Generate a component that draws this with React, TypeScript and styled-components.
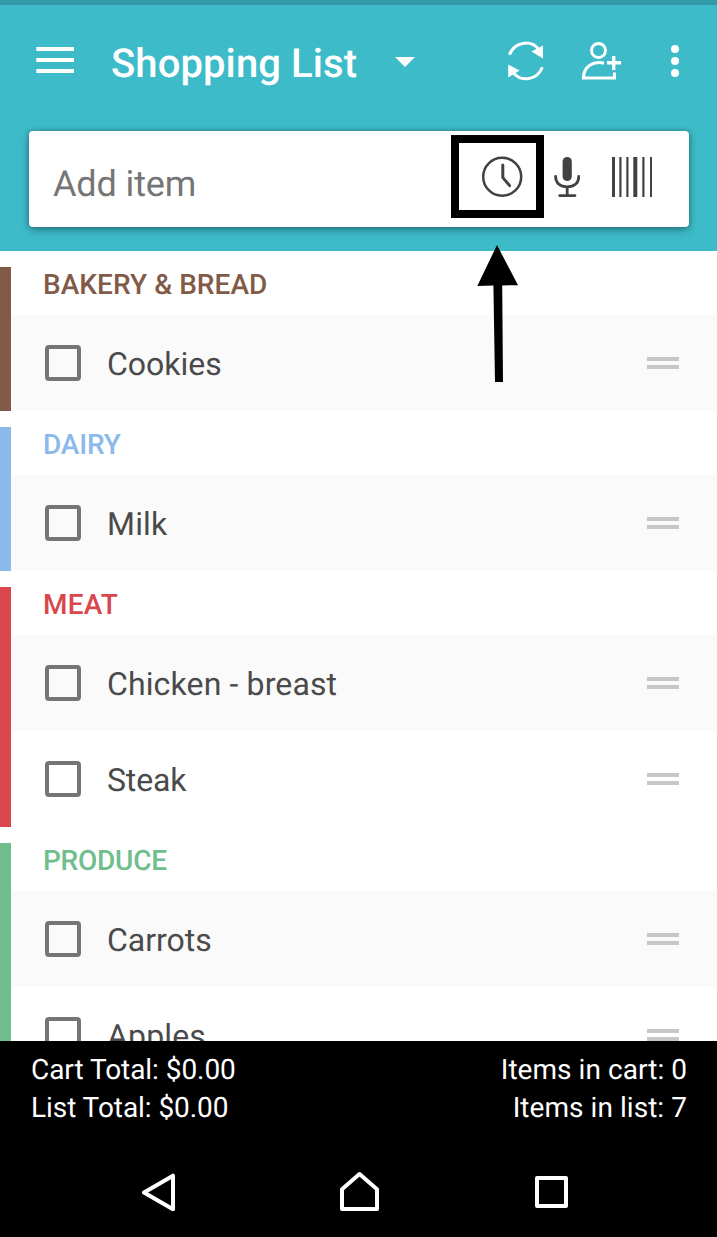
import React from 'react';
import styled, { createGlobalStyle } from 'styled-components';

const GlobalStyle = createGlobalStyle`
  * { box-sizing: border-box; }
  body {
    margin: 0;
    background: #fff;
    font-family: Roboto, "Liberation Sans", sans-serif;
    text-rendering: geometricPrecision;
  }
  svg { display: block; flex: none; }
`;

const Screen = styled.div`
  display: flex;
  flex-direction: column;
  width: 717px;
  height: 1237px;
  overflow: hidden;
  background: #fff;
`;

const Header = styled.header`
  position: relative;
  flex: none;
  height: 251px;
  background: #3dbbc9;
  border-top: 5px solid #339ba7;
`;

const Toolbar = styled.div`
  display: flex;
  align-items: center;
  height: 112px;
  padding: 0 38px 0 36px;
`;

const IconButton = styled.button<{ $gap?: number; $lift?: number; $drop?: number }>`
  display: flex;
  padding: 0;
  margin: ${(p) => p.$drop ?? 0}px 0 ${(p) => p.$lift ?? 0}px ${(p) => p.$gap ?? 0}px;
  border: 0;
  background: none;
`;

const Title = styled.h1`
  margin: 5px 0 0 37px;
  width: 247px;
  font-size: 40px;
  font-weight: 500;
  line-height: 48px;
  letter-spacing: 0.1px;
  color: #fff;
  white-space: nowrap;
`;

const Actions = styled.div`
  display: flex;
  align-items: center;
  margin-left: auto;
`;

const SearchCard = styled.div`
  display: flex;
  align-items: center;
  width: 660px;
  height: 96px;
  margin: 14px 0 0 29px;
  padding: 0 36px 0 24px;
  border-radius: 4px;
  background: #fff;
  box-shadow: 0 3px 9px rgba(0, 0, 0, 0.3), 0 0 5px rgba(0, 0, 0, 0.25);
`;

const Placeholder = styled.span`
  flex: 1;
  padding-top: 9px;
  font-size: 36px;
  line-height: 42px;
  letter-spacing: -0.12px;
  color: #757575;
`;

const Highlight = styled.div`
  display: flex;
  width: 93px;
  height: 83px;
  margin-top: -5px;
  padding: 13px 0 0 22px;
  border: 8px solid #000;
`;

const SearchTools = styled.div`
  display: flex;
  align-items: center;
`;

const PointerArrow = styled.svg`
  position: absolute;
  left: 476px;
  top: 239px;
  z-index: 2;
`;

const List = styled.main`
  flex: none;
  height: 790px;
  overflow: hidden;
`;

const Section = styled.section<{ $color: string }>`
  margin-top: 16px;
  border-left: 11px solid ${(p) => p.$color};
`;

const SectionTitle = styled.h2<{ $color: string; $tracking: number }>`
  margin: 0;
  height: 48px;
  padding-left: 32px;
  font-size: 28px;
  font-weight: 500;
  line-height: 35px;
  letter-spacing: ${(p) => p.$tracking}px;
  color: ${(p) => p.$color};
`;

const Row = styled.div<{ $shaded: boolean }>`
  display: flex;
  align-items: center;
  height: 96px;
  padding: 0 38px 0 34px;
  background: ${(p) => (p.$shaded ? '#fafafa' : '#fff')};
`;

const Checkbox = styled.span`
  width: 36px;
  height: 36px;
  border: 4px solid #757575;
  border-radius: 4px;
`;

const ItemName = styled.span<{ $tracking: number }>`
  flex: 1;
  margin-left: 26px;
  padding-top: 2px;
  font-size: 32px;
  line-height: 38px;
  letter-spacing: ${(p) => p.$tracking}px;
  color: #4a4a4a;
`;

const Handle = styled.span`
  width: 32px;
  height: 12px;
  border: solid #c7c7c7;
  border-width: 4px 0;
`;

const Totals = styled.footer`
  display: flex;
  justify-content: space-between;
  flex: none;
  height: 98px;
  padding: 10px 30px 0 31px;
  background: #000;
  color: #fff;
  font-size: 28px;
  line-height: 38px;
`;

const TotalsColumn = styled.div<{ $end?: boolean }>`
  text-align: ${(p) => (p.$end ? 'right' : 'left')};
  letter-spacing: ${(p) => (p.$end ? 0.05 : -0.06)}px;
`;

const NavBar = styled.nav`
  display: grid;
  flex: 1;
  grid-template-columns: 199px 195px auto;
  align-items: center;
  padding: 7px 0 0 141px;
  background: #000;
`;

const MenuIcon = () => (
  <svg width="38" height="26" fill="#fff">
    <path d="M.3 0H38v4H.3zM.3 11H38v4H.3zM.3 22H38v4H.3z" />
  </svg>
);

const CaretIcon = () => (
  <svg width="20" height="10" fill="#fff">
    <path d="M0 0h20L10 10z" />
  </svg>
);

const SyncIcon = () => (
  <svg width="36" height="40" fill="none" stroke="#fff" strokeWidth="3">
    <path d="M1.4 13.8C6 1.2 22.5-2.2 31 8.6" />
    <path d="M34.3 26.2C29.5 38.8 13.5 42 5 31.4" />
    <path d="M35 4.5v13L23.4 10.6z" fill="#fff" stroke="none" />
    <path d="M.2 23.5v13.1L11.6 29.6z" fill="#fff" stroke="none" />
  </svg>
);

const AddPersonIcon = () => (
  <svg width="40" height="40" fill="none" stroke="#fff" strokeWidth="3">
    <circle cx="17.5" cy="9.5" r="7" />
    <path d="M23 22.2C12 19.6 2.8 25.6 2.4 37H33.5v-5.4" />
    <path d="M26 21.8h14M32.7 15v14" strokeWidth="3.4" />
  </svg>
);

const MoreIcon = () => (
  <svg width="8" height="32" fill="#fff">
    <circle cx="4" cy="4" r="4" />
    <circle cx="4" cy="16" r="4" />
    <circle cx="4" cy="28" r="4" />
  </svg>
);

const ClockIcon = () => (
  <svg width="42" height="42" fill="none" stroke="#424242">
    <circle cx="21.2" cy="20.8" r="19" strokeWidth="2.5" />
    <path d="M21.8 9v12.6l6.8 8" strokeWidth="3" strokeLinecap="round" strokeLinejoin="round" />
  </svg>
);

const MicIcon = () => (
  <svg width="26" height="42" fill="none" stroke="#424242" strokeWidth="2.8" strokeLinecap="round">
    <rect x="8.6" y="1" width="9.2" height="24" rx="4.6" fill="#424242" stroke="none" />
    <path d="M1.6 20.5c0 6.8 4.8 10.3 11.6 10.3s11.6-3.5 11.6-10.3M13.2 31v8.5M5.7 39.6h15.3" />
  </svg>
);

const BarcodeIcon = () => (
  <svg width="41" height="40" fill="#424242">
    <path d="M0 0h3v40H0zM7.3 0h2.2v40H7.3zM14.3 0h2.2v40h-2.2zM21.3 0h4v40h-4zM30.3 0h2.2v40h-2.2zM38 0h2v40h-2z" />
  </svg>
);

const BackIcon = () => (
  <svg width="34" height="38" fill="none" stroke="#fff" strokeWidth="4" strokeLinejoin="round">
    <path d="M32 2.7v33.6L3 19.5z" />
  </svg>
);

const HomeIcon = () => (
  <svg width="40" height="40" fill="none" stroke="#fff" strokeWidth="4" strokeLinejoin="round">
    <path d="M19.5 2.1 37 17.2V37H2V17.2z" />
  </svg>
);

const RecentsIcon = () => (
  <svg width="33" height="32" fill="none" stroke="#fff" strokeWidth="4" strokeLinejoin="round">
    <path d="M2 2h29v28H2z" />
  </svg>
);

const sections = [
  {
    name: 'BAKERY & BREAD',
    color: '#825b48',
    tracking: 0.05,
    items: [{ name: 'Cookies', tracking: 0 }],
  },
  {
    name: 'DAIRY',
    color: '#8ab9ea',
    tracking: -0.2,
    items: [{ name: 'Milk', tracking: 0.2 }],
  },
  {
    name: 'MEAT',
    color: '#d9474d',
    tracking: 0.2,
    items: [
      { name: 'Chicken - breast', tracking: 0.13 },
      { name: 'Steak', tracking: -0.15 },
    ],
  },
  {
    name: 'PRODUCE',
    color: '#70bd8d',
    tracking: -0.25,
    items: [
      { name: 'Carrots', tracking: 0 },
      { name: 'Apples', tracking: 0.15 },
    ],
  },
];

export default function App() {
  return (
    <Screen>
      <GlobalStyle />
      <Header>
        <Toolbar>
          <IconButton aria-label="Menu" $lift={2}><MenuIcon /></IconButton>
          <Title>Shopping List</Title>
          <IconButton aria-label="Choose list" $gap={37} $drop={2}><CaretIcon /></IconButton>
          <Actions>
            <IconButton aria-label="Sync"><SyncIcon /></IconButton>
            <IconButton aria-label="Share list" $gap={37.5}><AddPersonIcon /></IconButton>
            <IconButton aria-label="More" $gap={50}><MoreIcon /></IconButton>
          </Actions>
        </Toolbar>
        <SearchCard>
          <Placeholder>Add item</Placeholder>
          <SearchTools>
            <Highlight><ClockIcon /></Highlight>
            <IconButton aria-label="Voice input" $gap={10} $lift={4}><MicIcon /></IconButton>
            <IconButton aria-label="Scan barcode" $gap={32} $lift={4}><BarcodeIcon /></IconButton>
          </SearchTools>
        </SearchCard>
        <PointerArrow width="43" height="140">
          <path d="M21 1 42 41.2 26.2 41.4 27 138h-8L17.4 41.6 1.3 42z" fill="#000" />
        </PointerArrow>
      </Header>
      <List>
        {sections.map((section) => (
          <Section key={section.name} $color={section.color}>
            <SectionTitle $color={section.color} $tracking={section.tracking}>
              {section.name}
            </SectionTitle>
            {section.items.map((item, index) => (
              <Row key={item.name} $shaded={index % 2 === 0}>
                <Checkbox />
                <ItemName $tracking={item.tracking}>{item.name}</ItemName>
                <Handle />
              </Row>
            ))}
          </Section>
        ))}
      </List>
      <Totals>
        <TotalsColumn>
          <div>Cart Total: $0.00</div>
          <div>List Total: $0.00</div>
        </TotalsColumn>
        <TotalsColumn $end>
          <div>Items in cart: 0</div>
          <div>Items in list: 7</div>
        </TotalsColumn>
      </Totals>
      <NavBar>
        <BackIcon />
        <HomeIcon />
        <RecentsIcon />
      </NavBar>
    </Screen>
  );
}
